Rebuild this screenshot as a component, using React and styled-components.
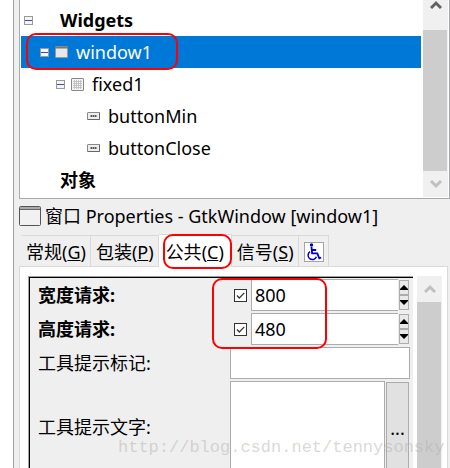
import { useState } from "react";
import styled, { createGlobalStyle, css } from "styled-components";

const GlobalStyle = createGlobalStyle`
    * {
        box-sizing: border-box;
    }
    body {
        margin: 0;
        background: #fff;
    }
    body, button, input, textarea {
        font-family: "Noto Sans", "Noto Sans CJK SC", sans-serif;
        font-size: 18px;
        line-height: 24px;
        color: #000;
    }
    button {
        border: none;
        padding: 0;
        background: none;
    }
    svg {
        display: block;
        flex: none;
    }
`

const Dock = styled.main`
    position: relative;
    display: flex;
    flex-direction: column;
    height: 100vh;
    overflow: hidden;
    margin-left: 13px;
    padding-left: 5px;
    border-left: 1px solid #a0a0a0;
    background: #efefef;
`

const TreeBox = styled.section`
    display: flex;
    flex: none;
    gap: 2px;
    background: #fff;
    border: 1px solid #a9a9b2;
    border-top: none;
    padding: 0 1px 1px;
`

const Tree = styled.ul`
    flex: 1;
    margin: 0;
    padding: 4px 0 1px;
    list-style: none;
`

const TreeRow = styled.li`
    position: relative;
    display: flex;
    align-items: center;
    height: 32px;
    padding-left: ${(props) => 3 + props.$level * 16}px;
    font-weight: ${(props) => (props.$bold ? 700 : 400)};
    color: ${(props) => (props.$selected ? "#fff" : "#000")};
    background: ${(props) => (props.$selected ? "#0078d7" : "transparent")};
`

const Expander = styled.button`
    width: 9px;
    height: 9px;
    flex: none;
    visibility: ${(props) => (props.$hidden ? "hidden" : "visible")};
`

const RowIcon = styled.span`
    display: flex;
    width: 13px;
    margin: 0 8px 0 6px;
`

const Mark = styled.span`
    position: absolute;
    border: 2px solid #f00;
    border-radius: 10px;
    pointer-events: none;
    z-index: 1;
    ${(props) => props.$on === "row" && css`
        left: 5px;
        top: -3px;
        width: 152px;
        height: 37px;
    `}
    ${(props) => props.$on === "tab" && css`
        inset: -1px -1px -2px 4px;
    `}
    ${(props) => props.$on === "sizes" && css`
        left: -18px;
        top: -1px;
        width: 115px;
        height: 71px;
    `}
`

const Scroll = styled.div`
    display: flex;
    flex-direction: column;
    flex: none;
    width: 25px;
    background: #f0f0f0;
`

const ScrollButton = styled.button`
    display: flex;
    align-items: center;
    justify-content: center;
    flex: none;
    height: ${(props) => props.$height}px;
    padding-bottom: ${(props) => (props.$cut ? 21 : 0)}px;
    color: ${(props) => (props.$dim ? "#bfbfbf" : "#606060")};
`

const Thumb = styled.div`
    flex: 1;
    margin-right: 1px;
    background: #cdcdcd;
`

const Heading = styled.h1`
    display: flex;
    align-items: center;
    flex: none;
    gap: 4px;
    height: 35px;
    margin: 0;
    padding-bottom: 1px;
    font-size: 18px;
    font-weight: 400;
    white-space: nowrap;
`

const Tabs = styled.div`
    display: flex;
    align-items: flex-end;
    flex: none;
    padding-left: 2px;
`

const Tab = styled.button`
    position: relative;
    display: flex;
    align-items: center;
    justify-content: center;
    height: ${(props) => (props.$active ? 33 : 31)}px;
    padding: ${(props) => (props.$active ? "1px 7px 0" : "2px 4px 0 5px")};
    border-top: 1px solid #d9d9d9;
    border-right: 1px solid #d9d9d9;
    background: ${(props) => (props.$active ? "#fff" : "#efefef")};
    margin-bottom: ${(props) => (props.$active ? -1 : 0)}px;
    z-index: ${(props) => (props.$active ? 1 : 0)};
    white-space: nowrap;
`

const AccessIcon = styled.span`
    display: flex;
    padding: 0 1px;
    border: 1px solid #a5a5a5;
    background: #fff;
`

const Page = styled.section`
    display: flex;
    flex: 1;
    gap: 4px;
    min-height: 0;
    margin-right: 2px;
    padding: 9px 5px 0 8px;
    border: 1px solid #d9d9d9;
    border-bottom: none;
    background: #fff;
`

const Form = styled.form`
    flex: 1;
    border-top: 1px solid #a0a0a0;
    border-left: 1px solid #a0a0a0;
    box-shadow: inset 1px 1px #000;
    background: #efefef;
    padding: 2px 3px 0 9px;
`

const Field = styled.div`
    position: relative;
    display: grid;
    grid-template-columns: 192px 1fr;
    align-items: center;
    height: ${(props) => (props.$tall ? 94 : 34)}px;
`

const Label = styled.label`
    padding-bottom: 2px;
    font-weight: ${(props) => (props.$bold ? 700 : 400)};
    white-space: nowrap;
`

const Control = styled.div`
    position: relative;
    display: flex;
    align-items: center;
    gap: 1px;
    height: 100%;
    min-width: 0;
    padding-bottom: 2px;
`

const Check = styled.input`
    appearance: none;
    flex: none;
    width: 13px;
    height: 13px;
    margin: 0 3px 0 4px;
    border: 1px solid #333;
    background: #fff;
    &:checked {
        background: #fff url("data:image/svg+xml,%3Csvg xmlns='http://www.w3.org/2000/svg' viewBox='0 0 11 11'%3E%3Cpath d='M2 5.5l2.3 2.5L9.3 2.8' fill='none' stroke='%23333' stroke-width='1.2'/%3E%3C/svg%3E");
    }
`

const boxed = css`
    flex: 1;
    min-width: 0;
    height: 100%;
    margin: 0;
    padding: 0 3px 1px;
    border: 1px solid #acacac;
    border-radius: 0;
    background: #fff;
    outline: none;
`

const Entry = styled.input`
    ${boxed}
    border-right-width: ${(props) => (props.$spin ? 0 : 1)}px;
`

const TextArea = styled.textarea`
    ${boxed}
    resize: none;
`

const Spinner = styled.div`
    display: flex;
    flex-direction: column;
    width: 10px;
    height: 30px;
    margin-right: 1px;
`

const SpinButton = styled.button`
    display: flex;
    flex: 1;
    align-items: center;
    justify-content: center;
    border: 1px solid #acacac;
    background: #e9e9e9;
`

const MoreButton = styled.button`
    align-self: stretch;
    width: 23px;
    margin: 1px 1px 0 0;
    border: 1px solid #acacac;
    background: #e1e1e1;
`

const Watermark = styled.span`
    position: absolute;
    left: 104px;
    bottom: 8px;
    font-family: "Liberation Mono", monospace;
    font-size: 17px;
    line-height: 24px;
    color: rgba(180, 180, 170, 0.5);
    pointer-events: none;
    z-index: 2;
`

const Minus = () => (
    <svg width="9" height="9" viewBox="0 0 9 9">
        <rect x=".5" y=".5" width="8" height="8" fill="#f5f5f5" stroke="#999" />
        <path d="M1 4.5h7" stroke="#3c50a0" />
    </svg>
)

const Chevron = ({ down }) => (
    <svg width="12" height="10" viewBox="0 0 12 10">
        <path d={down ? "M1 2l5 5 5-5" : "M1 8l5-5 5 5"} fill="none" stroke="currentColor" strokeWidth="3" />
    </svg>
)

const Triangle = ({ down }) => (
    <svg width="8" height="5" viewBox="0 0 8 5">
        <path d={down ? "M0 0h8v1L4 5 0 1z" : "M0 5h8V4L4 0 0 4z"} />
    </svg>
)

const icons = {
    window: (
        <svg width="13" height="12" viewBox="0 0 13 12">
            <rect x=".5" y=".5" width="12" height="11" rx=".5" fill="#e8e8e8" stroke="#999" />
            <path d="M0 1.5h13" stroke="#777" strokeWidth="2" />
        </svg>
    ),
    fixed: (
        <svg width="13" height="13" viewBox="0 0 13 13">
            <rect x=".5" y=".5" width="12" height="12" rx=".5" fill="#f4f4f4" stroke="#888" />
            <path d="M3.5 2v9M5.5 2v9M7.5 2v9M9.5 2v9M2 3.5h9M2 5.5h9M2 7.5h9M2 9.5h9" stroke="#bbb" strokeWidth=".8" />
        </svg>
    ),
    button: (
        <svg width="13" height="8" viewBox="0 0 13 8">
            <rect x=".5" y=".5" width="12" height="7" rx=".5" fill="#eee" stroke="#888" />
            <path d="M.5 7.5h12v-7" fill="none" stroke="#666" />
            <path d="M3.5 4h2M6 4h1.5M8 4h1.5" stroke="#555" strokeWidth="2" />
        </svg>
    ),
}

const rows = [
    { name: "Widgets", level: 0, bold: true, open: true },
    { name: "window1", level: 1, icon: "window", open: true },
    { name: "fixed1", level: 2, icon: "fixed", open: true },
    { name: "buttonMin", level: 3, icon: "button" },
    { name: "buttonClose", level: 3, icon: "button" },
    { name: "对象", level: 0, bold: true },
]

const tabs = [
    { name: "常规", key: "G" },
    { name: "包装", key: "P" },
    { name: "公共", key: "C" },
    { name: "信号", key: "S" },
]

function SizeField({ id, label, start, children }) {
    const [value, setValue] = useState(start);
    return (
        <Field>
            <Label $bold htmlFor={id}>{label}</Label>
            <Control>
                {children}
                <Check type="checkbox" defaultChecked aria-label={label} />
                <Entry $spin id={id} value={value} onChange={(e) => setValue(e.target.value)} />
                <Spinner>
                    <SpinButton type="button" aria-label="+" onClick={() => setValue(Number(value) + 1)}>
                        <Triangle />
                    </SpinButton>
                    <SpinButton type="button" aria-label="-" onClick={() => setValue(Number(value) - 1)}>
                        <Triangle down />
                    </SpinButton>
                </Spinner>
            </Control>
        </Field>
    );
}

function App() {
    const [selected, setSelected] = useState("window1");
    const [tab, setTab] = useState("C");
    return (
        <>
            <GlobalStyle />
            <Dock>
                <TreeBox>
                    <Tree role="tree">
                        {rows.map((row) => (
                            <TreeRow
                                key={row.name}
                                role="treeitem"
                                $level={row.level}
                                $bold={row.bold}
                                $selected={row.name === selected}
                                onClick={() => setSelected(row.name)}
                            >
                                <Expander $hidden={!row.open} aria-label={row.name}><Minus /></Expander>
                                <RowIcon>{icons[row.icon]}</RowIcon>
                                {row.name}
                                {row.name === "window1" && <Mark $on="row" />}
                            </TreeRow>
                        ))}
                    </Tree>
                    <Scroll>
                        <ScrollButton $height={30} $cut aria-label="up"><Chevron /></ScrollButton>
                        <Thumb />
                        <ScrollButton $height={26} $dim aria-label="down"><Chevron down /></ScrollButton>
                    </Scroll>
                </TreeBox>
                <Heading>
                    <svg width="22" height="20" viewBox="0 0 22 20">
                        <rect x=".5" y=".5" width="21" height="19" rx="1" fill="#f1f1f1" stroke="#555" />
                        <path d="M1 2h20" stroke="#aaa" strokeWidth="2" />
                        <path d="M1 3.5h20" stroke="#666" />
                    </svg>
                    窗口 Properties - GtkWindow [window1]
                </Heading>
                <Tabs role="tablist">
                    {tabs.map((t) => (
                        <Tab key={t.key} role="tab" $active={t.key === tab} onClick={() => setTab(t.key)}>
                            <span>{t.name}(<u>{t.key}</u>)</span>
                            {t.key === "C" && <Mark $on="tab" />}
                        </Tab>
                    ))}
                    <Tab role="tab" aria-label="accessibility">
                        <AccessIcon>
                            <svg width="16" height="18" viewBox="0 0 16 18" fill="none" stroke="#0000c8" strokeWidth="1.8">
                                <circle cx="5.5" cy="2" r="1.7" fill="#0000c8" stroke="none" />
                                <path d="M5.5 4l.6 6.3h5.2l2 5 1.9-.8M5.8 7h4.4" />
                                <path d="M4 8.7a4.3 4.3 0 1 0 6.4 5.1" strokeWidth="1.5" />
                            </svg>
                        </AccessIcon>
                    </Tab>
                </Tabs>
                <Page>
                    <Form>
                        <SizeField id="width" label="宽度请求:" start="800">
                            <Mark $on="sizes" />
                        </SizeField>
                        <SizeField id="height" label="高度请求:" start="480" />
                        <Field>
                            <Label htmlFor="markup">工具提示标记:</Label>
                            <Control><Entry id="markup" /></Control>
                        </Field>
                        <Field $tall>
                            <Label htmlFor="tooltip">工具提示文字:</Label>
                            <Control>
                                <TextArea id="tooltip" />
                                <MoreButton type="button">...</MoreButton>
                            </Control>
                        </Field>
                    </Form>
                    <Scroll>
                        <ScrollButton $height={26} $dim aria-label="up"><Chevron /></ScrollButton>
                        <Thumb />
                    </Scroll>
                </Page>
                <Watermark>http://blog.csdn.net/tennysonsky</Watermark>
            </Dock>
        </>
    );
}

export default App;
